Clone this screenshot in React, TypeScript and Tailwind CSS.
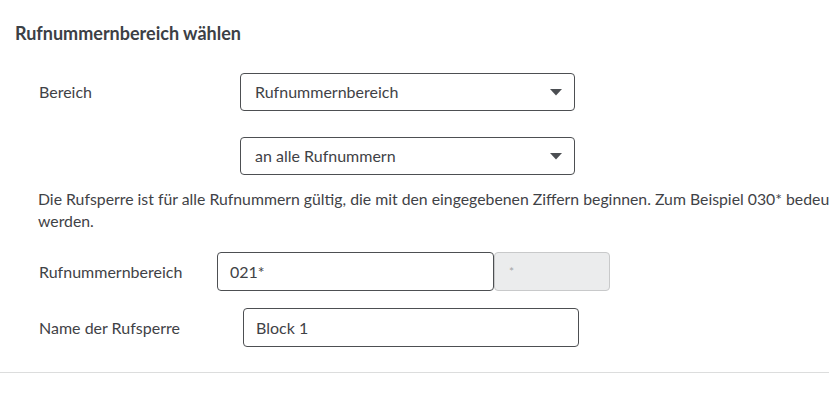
import React from 'react';

const font = { fontFamily: 'Lato, "Noto Sans", sans-serif' };

const Select: React.FC<{ value: string }> = ({ value }) => (
  <div className="flex h-[38px] w-[335px] items-center justify-between rounded-[4px] border border-[#4d4f52] bg-white pl-[14px] pr-[12px] text-[16px] text-[#3f4246]">
    <span>{value}</span>
    <svg width="12" height="7" viewBox="0 0 12 7">
      <path d="M0 0 L12 0 L6 6.5 Z" fill="#4b4e52" />
    </svg>
  </div>
);

export default function App() {
  return (
    <div className="w-[829px] h-[397px] overflow-hidden bg-white text-[#3f4246]" style={font}>
      <div className="w-[1200px]">
        <h2 className="pl-[15px] pt-[22px] text-[18px] font-bold leading-[22px] text-[#3c4045]">
          Rufnummernbereich wählen
        </h2>

        <div className="mt-[29px] flex items-center pl-[39px]">
          <span className="w-[201px] text-[16px]">Bereich</span>
          <Select value="Rufnummernbereich" />
        </div>

        <div className="mt-[26px] pl-[240px]">
          <Select value="an alle Rufnummern" />
        </div>

        <p className="mt-[13px] pl-[38px] text-[15.8px] leading-[22px]">
          Die Rufsperre ist für alle Rufnummern gültig, die mit den eingegebenen Ziffern beginnen. Zum Beispiel 030* bedeutet, dass alle Rufnummern gesperrt
          <br />
          werden.
        </p>

        <div className="mt-[20px] flex items-center pl-[39px]">
          <span className="w-[178px] text-[16px]">Rufnummernbereich</span>
          <div className="flex h-[39px] w-[277px] items-center rounded-[4px] border border-[#4d4f52] bg-white pl-[12px] text-[16px]">
            021*
          </div>
          <div className="flex h-[39px] w-[116px] items-center rounded-[4px] border border-[#c8c9ca] bg-[#ebeced] pl-[14px] text-[12px] text-[#a4a6a8]">
            *
          </div>
        </div>

        <div className="mt-[17px] flex items-center pl-[39px]">
          <span className="w-[204px] text-[16px]">Name der Rufsperre</span>
          <div className="flex h-[39px] w-[336px] items-center rounded-[4px] border border-[#4d4f52] bg-white pl-[12px] text-[16px]">
            Block 1
          </div>
        </div>

        <div className="mt-[25px] h-px w-[829px] bg-[#dcdddd]" />
      </div>
    </div>
  );
}
